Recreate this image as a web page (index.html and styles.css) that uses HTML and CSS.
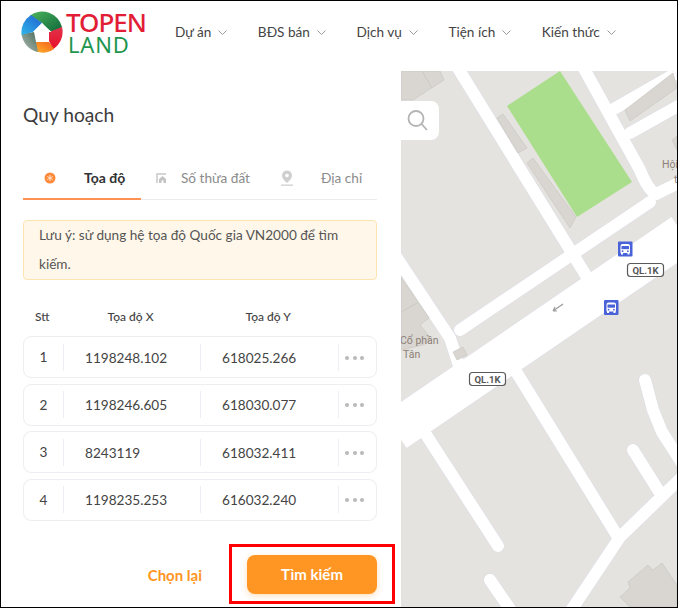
FILE: index.html
```html
<!doctype html>
<html>
<head>
    <title>Quy hoạch</title>
    <link rel="stylesheet" href="styles.css">
</head>
<body>
<div class="frame">

    <header class="header">
        <div class="logo">
            <svg class="logo-mark" width="42" height="42" viewBox="0 0 42 42">
                <defs>
                    <linearGradient id="gGreen" x1="0" y1="0" x2="1" y2="1"><stop offset="0" stop-color="#4cb45c"/><stop offset="1" stop-color="#0a6238"/></linearGradient>
                    <linearGradient id="gRed" x1="0" y1="0" x2="0" y2="1"><stop offset="0" stop-color="#e0324a"/><stop offset="1" stop-color="#e8102a"/></linearGradient>
                    <linearGradient id="gOrange" x1="1" y1="0" x2="0" y2="1"><stop offset="0" stop-color="#f2601e"/><stop offset="1" stop-color="#ffb02a"/></linearGradient>
                    <linearGradient id="gGray" x1="0" y1="1" x2="1" y2="0"><stop offset="0" stop-color="#b4c0b6"/><stop offset="1" stop-color="#4a6a5c"/></linearGradient>
                    <linearGradient id="gBlue" x1="0" y1="1" x2="1" y2="0"><stop offset="0" stop-color="#2fb6e8"/><stop offset="1" stop-color="#1f5fd0"/></linearGradient>
                </defs>
                <path d="M9 4.400 A20.500 20.500 0 0 1 41 16 L30 24 L21 12 Z" fill="url(#gGreen)"/>
                <path d="M41 16 A20.500 20.500 0 0 1 32 38.300 L28 30 L28 21 Z" fill="url(#gRed)"/>
                <path d="M33 38 A20.500 20.500 0 0 1 15 40.600 L15 31 L28 31 Z" fill="url(#gOrange)"/>
                <path d="M17 41 A20.500 20.500 0 0 1 0.600 23 L13 21 L15 31 Z" fill="url(#gGray)"/>
                <path d="M0.600 24 A20.500 20.500 0 0 1 10 4 L21 12 L12 21 Z" fill="url(#gBlue)"/>
                <path d="M21 12 L30.500 21 L28 21 L28 31 L15 31 L15 21 L12 21 Z" fill="#fff"/>
            </svg>
            <div class="logo-text">
                <span class="logo-top">TOPEN</span>
                <span class="logo-land">LAND</span>
            </div>
        </div>
        <nav class="nav">
            <a class="nav-item">Dự án <svg class="chev" width="9" height="5" viewBox="0 0 9 5"><path d="M0.500 0.500 L4.500 4.500 L8.500 0.500"/></svg></a>
            <a class="nav-item">BĐS bán <svg class="chev" width="9" height="5" viewBox="0 0 9 5"><path d="M0.500 0.500 L4.500 4.500 L8.500 0.500"/></svg></a>
            <a class="nav-item">Dịch vụ <svg class="chev" width="9" height="5" viewBox="0 0 9 5"><path d="M0.500 0.500 L4.500 4.500 L8.500 0.500"/></svg></a>
            <a class="nav-item">Tiện ích <svg class="chev" width="9" height="5" viewBox="0 0 9 5"><path d="M0.500 0.500 L4.500 4.500 L8.500 0.500"/></svg></a>
            <a class="nav-item">Kiến thức <svg class="chev" width="9" height="5" viewBox="0 0 9 5"><path d="M0.500 0.500 L4.500 4.500 L8.500 0.500"/></svg></a>
        </nav>
    </header>

    <div class="main">
        <section class="panel">
            <h1 class="title">Quy hoạch</h1>

            <div class="tabs">
                <div class="tab tab-coord active">
                    <svg width="12" height="12" viewBox="0 0 12 12">
                        <circle cx="6" cy="6" r="5.500" fill="#ff8a3c"/>
                        <path d="M6 3 V9 M3.400 4.500 L8.600 7.500 M8.600 4.500 L3.400 7.500" stroke="#ffe3cc" stroke-width="1"/>
                    </svg>
                    <span>Tọa độ</span>
                </div>
                <div class="tab tab-plot">
                    <svg width="12" height="12" viewBox="0 0 12 12">
                        <path d="M1 1 H11 V3 H3 V11 H1 Z" fill="#d5d5d5"/>
                        <path d="M4 11 V7 L7.500 4 L11 7 V11 H8.500 V8.500 H6.500 V11 Z" fill="#c4c4c4"/>
                    </svg>
                    <span>Số thừa đất</span>
                </div>
                <div class="tab tab-addr">
                    <svg width="14" height="16" viewBox="0 0 14 16">
                        <path d="M7 0.500 A5 5 0 0 1 12 5.500 C12 8.500 9 11 7 13 C5 11 2 8.500 2 5.500 A5 5 0 0 1 7 0.500 Z" fill="#cfcfcf"/>
                        <circle cx="7" cy="5.500" r="1.800" fill="#fff"/>
                        <rect x="1" y="14.500" width="12" height="1.300" fill="#cfcfcf"/>
                    </svg>
                    <span>Địa chỉ</span>
                </div>
            </div>

            <div class="note">Lưu ý: sử dụng hệ tọa độ Quốc gia VN2000 để tìm kiếm.</div>

            <div class="coord-head">
                <span>Stt</span>
                <span class="head-x">Tọa độ X</span>
                <span class="head-y">Tọa độ Y</span>
            </div>

            <div class="coord-list">
                <div class="coord-row">
                    <span class="c-no">1</span><span class="c-val">1198248.102</span><span class="c-val">618025.266</span>
                    <span class="c-more"><i></i><i></i><i></i></span>
                </div>
                <div class="coord-row">
                    <span class="c-no">2</span><span class="c-val">1198246.605</span><span class="c-val">618030.077</span>
                    <span class="c-more"><i></i><i></i><i></i></span>
                </div>
                <div class="coord-row">
                    <span class="c-no">3</span><span class="c-val">8243119</span><span class="c-val">618032.411</span>
                    <span class="c-more"><i></i><i></i><i></i></span>
                </div>
                <div class="coord-row">
                    <span class="c-no">4</span><span class="c-val">1198235.253</span><span class="c-val">616032.240</span>
                    <span class="c-more"><i></i><i></i><i></i></span>
                </div>
            </div>

            <div class="actions">
                <a class="reset">Chọn lại</a>
                <button class="search-btn">Tìm kiếm</button>
                <div class="highlight"></div>
            </div>
        </section>

        <section class="map">
            <svg class="map-svg" width="276" height="536" viewBox="401 71 276 536">
                <defs>
                    <g id="minor">
                        <path d="M456 65 L590 282"/>
                        <path d="M582 65 L640 170 Q648 190 656 194 L685 180"/>
                        <path d="M460 330 L650 202"/>
                        <path d="M612 110 L680 71"/>
                        <path d="M630 133 L680 105"/>
                        <path d="M395 255 L450 338 L462 375"/>
                        <path d="M512 365 L618 537"/>
                        <path d="M423 430 L498 546"/>
                        <path d="M490 580 L512 612"/>
                        <path d="M685 474 L620 537 L570 612"/>
                        <path d="M633 450 L660 493"/>
                        <path d="M645 380 L653 410 L662 432 L685 468"/>
                    </g>
                    <g id="bus">
                        <rect class="bus" width="14.500" height="15" rx="1"/>
                        <path class="bus-body" d="M4.500 2.500 H10 Q12 2.500 12 4.500 V11.500 H11.500 V13 H9.500 V11.500 H5 V13 H3 V11.500 H2.500 V4.500 Q2.500 2.500 4.500 2.500 Z"/>
                        <rect class="bus-win" x="3.500" y="4.500" width="7.500" height="3.200"/>
                        <circle class="bus-win" cx="4.600" cy="9.700" r="0.900"/>
                        <circle class="bus-win" cx="9.900" cy="9.700" r="0.900"/>
                    </g>
                </defs>
                <g class="minor-edge"><use href="#minor"/></g>
                <path class="main-edge" d="M395 431 L683 234"/>
                <g class="minor-road"><use href="#minor"/></g>
                <path class="main-road" d="M395 431 L683 234"/>

                <polygon class="park" points="507,106 560,71 632,182 577,217"/>

                <polygon class="bld" points="401,71 440,71 444,80 413,100 401,100"/>
                <path class="bld-line" d="M422 71 L432 88"/>
                <polygon class="bld" points="497,118 503,114 527,148 518,153"/>
                <polygon class="bld" points="527,163 533,158 576,217 570,228"/>
                <polygon class="bld" points="625,110 673,73 677,88 630,121"/>
                <polygon class="bld" points="672,140 677,136 677,150"/>
                <polygon class="bld" points="401,277 429,318 420,325 432,340 423,345 401,350"/>
                <path class="bld-line" d="M401 312 L417 303"/>
                <polygon class="bld" points="453,352 463,347 467,355 457,360"/>
                <polygon class="bld" points="620,597 630,588 628,582 648,565 653,570 662,563 677,585 677,607 630,607"/>

                <text class="poi" x="400" y="344">Cổ phần</text>
                <text class="poi" x="403" y="358">Tân</text>
                <text class="poi" x="662" y="168">Hội</text>
                <text class="poi" x="674" y="183">t</text>

                <path class="arrow" d="M563 304 L553 311 M553 311 L557 311 M553 311 L555 307"/>

                <use href="#bus" x="618" y="241.500"/>
                <use href="#bus" x="604" y="300"/>

                <rect class="shield" x="627.500" y="263.500" width="36" height="13" rx="3"/>
                <text class="shield-text" x="645.500" y="273.500">QL.1K</text>
                <rect class="shield" x="469.500" y="372.500" width="36" height="13" rx="3"/>
                <text class="shield-text" x="487.500" y="382.500">QL.1K</text>
            </svg>
            <div class="map-search">
                <svg width="24" height="24" viewBox="0 0 24 24">
                    <circle cx="10" cy="9.500" r="7.500"/>
                    <path d="M15.500 15 L21 21"/>
                </svg>
            </div>
        </section>
    </div>
</div>
</body>
</html>
```

FILE: styles.css
```css
* {box-sizing: border-box;}

html, body {margin: 0; padding: 0;}

body {
font-family: Lato, "Noto Sans", sans-serif;
font-size: 13.600px;
color: #444;
background: #fff;
}

.frame {
width: 678px;
height: 608px;
border: 1px solid #000;
overflow: hidden;
display: flex;
flex-direction: column;
}

/* header */
.header {
height: 70px;
display: flex;
align-items: center;
padding-left: 20px;
flex-shrink: 0;
}

.logo {
display: flex;
align-items: center;
gap: 3px;
width: 154px;
margin-top: -8px;
}

.logo-mark {flex-shrink: 0;}

.logo-text {
display: flex;
flex-direction: column;
font-family: "Noto Sans", sans-serif;
}

.logo-top {
color: #e21e36;
font-size: 26px;
line-height: 23px;
font-weight: 500;
letter-spacing: -1px;
}

.logo-land {
color: #1f9650;
font-size: 22px;
line-height: 20px;
padding-left: 2px;
letter-spacing: 0.800px;
}

.nav {
display: flex;
gap: 30.600px;
margin-top: -8px;
}

.nav-item {
display: flex;
align-items: center;
gap: 7px;
color: #444;
white-space: nowrap;
}

.chev {fill: none; stroke: #9a9a9a; stroke-width: 1;}

/* left panel */
.main {
flex: 1;
display: flex;
min-height: 0;
}

.panel {
width: 400px;
padding: 0 24px 0 22px;
position: relative;
flex-shrink: 0;
}

.title {
font-size: 19.200px;
font-weight: 400;
color: #3d3d3d;
margin: 30px 0 0 0;
line-height: 27px;
}

.tabs {
display: flex;
margin-top: 26px;
height: 46px;
border-bottom: 1px solid #ececec;
}

.tab {
width: 118px;
display: flex;
align-items: center;
color: #8b8b8b;
padding-top: 3px;
}

.tab.active {
color: #333;
font-size: 14px;
font-weight: 700;
border-bottom: 2px solid #ff9152;
height: 46px;
}

.tab-coord {padding-left: 21px; gap: 28px;}
.tab-plot {padding-left: 14px; gap: 14px;}
.tab-addr {padding-left: 21px; gap: 27px;}

.note {
margin-top: 20px;
height: 60px;
padding: 0 15px;
background: #fff8ea;
border: 1px solid #fde4b0;
border-radius: 4px;
line-height: 29px;
color: #555;
}

.coord-head {
display: flex;
margin-top: 28px;
height: 18px;
font-size: 12px;
line-height: 18px;
font-weight: 500;
color: #444;
padding-left: 12px;
}

.head-x {margin-left: 58px;}
.head-y {margin-left: 92px;}

.coord-list {
display: flex;
flex-direction: column;
gap: 5.500px;
margin-top: 10px;
}

.coord-row {
height: 42px;
border: 1px solid #eeeef2;
border-radius: 8px;
display: grid;
grid-template-columns: 39px 137px 138px 1fr;
align-items: center;
}

.c-no {text-align: center;}

.c-val {
height: 27px;
line-height: 29px;
padding-left: 21px;
border-left: 1px solid #eeeef4;
color: #444;
}

.c-more {
height: 27px;
border-left: 1px solid #eeeef4;
display: flex;
align-items: center;
gap: 3.500px;
padding-left: 6px;
padding-top: 1px;
}

.c-more i {
width: 4px;
height: 4px;
border-radius: 50%;
background: #b9b9b9;
}

.actions {
display: flex;
justify-content: flex-end;
align-items: center;
gap: 45px;
margin-top: 34px;
position: relative;
}

.reset {
color: #ff9523;
font-size: 15px;
font-weight: 700;
padding-top: 2px;
}

.search-btn {
width: 130px;
height: 39px;
border: 0;
border-radius: 8px;
background: #ff9523;
color: #fff;
font-family: inherit;
font-size: 15px;
font-weight: 700;
box-shadow: 0 2px 6px rgba(255, 149, 35, 0.3);
}

.highlight {
position: absolute;
left: 206px;
top: -11px;
width: 166px;
height: 60px;
border: 3px solid #f00;
}

/* map */
.map {
flex: 1;
position: relative;
background: #e5e3df;
border-radius: 0 6px 0 0;
overflow: hidden;
}

.map-svg {display: block;}

.minor-edge {fill: none; stroke: #dcdee8; stroke-width: 13; stroke-linecap: round; stroke-linejoin: round;}
.minor-road {fill: none; stroke: #fff; stroke-width: 12; stroke-linecap: round; stroke-linejoin: round;}
.main-edge {fill: none; stroke: #dcdee8; stroke-width: 42;}
.main-road {fill: none; stroke: #fff; stroke-width: 41;}

.park {fill: #aade8c;}
.bld {fill: #d9d6d2; stroke: #cdcac5; stroke-width: 0.800;}
.bld-line {fill: none; stroke: #cbc8c3; stroke-width: 1;}

.poi {font-family: Roboto, sans-serif; font-size: 10.500px; fill: #8c7f76;}

.arrow {fill: none; stroke: #9b9b9b; stroke-width: 1.200;}

.bus {fill: #4a62d8;}
.bus-body {fill: #fff;}
.bus-win {fill: #4a62d8;}

.shield {fill: #fff; stroke: #5a5a5a; stroke-width: 1.200;}
.shield-text {font-family: Roboto, sans-serif; font-size: 9.500px; font-weight: 700; fill: #555; text-anchor: middle;}

.map-search {
position: absolute;
left: 0;
top: 30px;
width: 38px;
height: 39px;
background: #fff;
border-radius: 0 8px 8px 0;
display: flex;
align-items: center;
padding-left: 5px;
}

.map-search svg {fill: none; stroke: #b4b4b4; stroke-width: 1.800;}
```
